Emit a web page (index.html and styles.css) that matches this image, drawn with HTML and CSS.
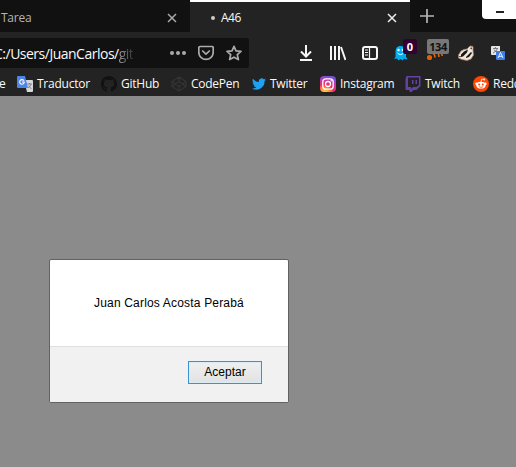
FILE: index.html
```
<!DOCTYPE html>
<html lang="es">
<head>
<meta charset="utf-8">
<title>A46</title>
<link rel="stylesheet" href="styles.css">
</head>
<body>
<header class="chrome">
  <div class="tabs">
    <div class="tab"><span class="tab-title">Tarea</span><svg class="close" width="10" height="10" viewBox="0 0 10 10"><path d="M1 1l8 8M9 1L1 9"/></svg></div>
    <div class="tab active"><i class="dot"></i><span class="tab-title">A46</span><svg class="close" width="10" height="10" viewBox="0 0 10 10"><path d="M1 1l8 8M9 1L1 9"/></svg></div>
    <svg class="plus" width="14" height="14" viewBox="0 0 14 14"><path d="M7 0v14M0 7h14"/></svg>
    <div class="minimize"><i></i></div>
  </div>
  <div class="toolbar">
    <div class="address">
      <span class="url">C:/Users/JuanCarlos/<span class="fade">git</span></span>
      <svg class="dots" width="16" height="16" viewBox="0 0 16 16"><circle cx="2" cy="8" r="2"/><circle cx="8" cy="8" r="2"/><circle cx="14" cy="8" r="2"/></svg>
      <svg class="line pocket" width="16" height="16" viewBox="0 0 16 16"><path d="M2 1.5h12a1.2 1.2 0 0 1 1.2 1.2v4.5a7.2 7.2 0 0 1-14.4 0V2.700A1.200 1.200 0 0 1 2 1.500zM4.700 6L8 9.200 11.300 6"/></svg>
      <svg class="line" width="16" height="16" viewBox="0 0 16 16"><path d="M8 1.300l2 4.500 5 .5-3.700 3.300 1.100 5L8 12.200l-4.400 2.400 1.100-5L1 6.300l5-.5z"/></svg>
    </div>
    <div class="actions">
      <svg width="14" height="18" viewBox="0 0 14 18"><path class="w" d="M7 1v11M2 7.500l5 5 5-5M1 16h12"/></svg>
      <svg width="16" height="16" viewBox="0 0 16 16"><path class="w" d="M1 1v14M5 1v14M9 1v14M11 2l4.500 13"/></svg>
      <svg width="16" height="16" viewBox="0 0 16 16"><rect class="w" x="1" y="2" width="14" height="12" rx="2"/><path class="w thin" d="M7.500 2v12M3 5h3M3 7.500h3M3 10h3"/></svg>
      <div class="ext"><svg class="ghost" width="16" height="16" viewBox="0 0 16 16"><path fill="#00aef0" d="M2.500 7C2.500 2.500 5 1 7.500 1S13 2.500 13 7v5l1.500 2-2 .5-1.500-1-1.500 2-2-1.500-2 1.500-1.500-2L1 14l1.500-2z"/><circle cx="5.500" cy="5" r="1.200" fill="#fff"/><circle cx="9.800" cy="5" r="1.200" fill="#fff"/><path d="M4.500 8q3 3.200 6 0" fill="none" stroke="#fff"/></svg><b class="badge zero">0</b></div>
      <div class="ext"><svg width="16" height="16" viewBox="0 0 16 16"><circle cx="2.500" cy="12.500" r="2.600" fill="#e66000"/><path d="M5.500 8q2.500 1 2.500 4.500M10 7q2.200 1.500 1.800 5M13.500 7q2 1.500 1.500 4" fill="none" stroke="#d8651c" stroke-width="1.700"/></svg><b class="badge count">134</b></div>
      <svg width="16" height="16" viewBox="0 0 16 16"><path fill="#eee4d8" stroke="#a98266" stroke-width=".8" d="M.5 10L3 6l3-1.500L9 4l3-3 3 .5v4l.5 4.500-2.500 4-4 1.500-5-1-3.500-1.500z"/><path fill="#151515" d="M3 9.500l3-3 4-2-1 3-4 4-2 .5zM8 12l5-5 1 1-3 4-3 1zM12 3l2-.5-.5 2z"/><path fill="#151515" d="M1 11h2l-1 1.500z"/></svg>
      <svg width="16" height="16" viewBox="0 0 16 16"><path fill="#e4e4e4" d="M2 1h8v9H2a1 1 0 0 1-1-1V2a1 1 0 0 1 1-1z"/><path d="M3 3.500h5M5.500 2v1.500M7.500 3.500Q7 6 3 8M4 4.500q1 2 3 3" fill="none" stroke="#666" stroke-width=".8"/><path fill="#3e7fe8" d="M6 6h8a1 1 0 0 1 1 1v7a1 1 0 0 1-1 1H7a1 1 0 0 1-1-1z"/><path d="M8 13l2.500-5.500L13 13M9 11.300h3" fill="none" stroke="#fff" stroke-width=".9"/></svg>
    </div>
  </div>
  <nav class="bookmarks">
    <a class="b-cut">e</a>
    <a class="b-translate"><svg width="16" height="16" viewBox="0 0 16 16"><path fill="#d5d7da" d="M7 4h8a1 1 0 0 1 1 1v10a1 1 0 0 1-1 1H10z"/><path fill="#4c86e8" d="M1 0h7l3 12H1a1 1 0 0 1-1-1V1a1 1 0 0 1 1-1z"/><path d="M7 4.800A2.300 2.300 0 1 0 7.300 6H5" fill="none" stroke="#fff" stroke-width="1.100"/><path d="M10 8h5M12.500 7v1M14 8q-1 3-3 4M11.500 9.500l3 3.500" fill="none" stroke="#6c7580" stroke-width=".8"/></svg><span>Traductor</span></a>
    <a class="b-github"><svg width="16" height="16" viewBox="0 0 16 16"><path fill="#111214" d="M8 0C3.580 0 0 3.580 0 8c0 3.540 2.290 6.530 5.470 7.590.4.070.55-.17.55-.38 0-.19-.01-.82-.01-1.490-2.010.37-2.530-.49-2.690-.94-.09-.23-.48-.94-.82-1.130-.28-.15-.68-.52-.01-.53.63-.01 1.080.58 1.230.82.72 1.210 1.870.87 2.330.66.07-.52.28-.87.51-1.070-1.780-.2-3.640-.89-3.640-3.950 0-.87.31-1.590.82-2.150-.08-.2-.36-1.020.08-2.120 0 0 .67-.21 2.200.82a7.600 7.600 0 0 1 4 0c1.530-1.040 2.200-.82 2.200-.82.44 1.100.16 1.920.08 2.120.51.56.82 1.270.82 2.150 0 3.070-1.870 3.750-3.650 3.950.29.25.54.73.54 1.480 0 1.070-.01 1.930-.01 2.200 0 .21.15.46.55.38A8 8 0 0 0 8 0z"/></svg><span>GitHub</span></a>
    <a class="b-codepen"><svg width="16" height="16" viewBox="0 0 16 16"><path d="M8 1l7 4.500v5L8 15l-7-4.500v-5zM1 5.500l7 5 7-5M1 10.500l7-5 7 5M8 1v4.500M8 10.500V15" fill="none" stroke="#343437" stroke-width="1.100"/></svg><span>CodePen</span></a>
    <a class="b-twitter"><svg width="14" height="14" viewBox="0 0 24 24"><path fill="#1da1f2" d="M24 4.600a10 10 0 0 1-2.800.8 5 5 0 0 0 2.100-2.700 10 10 0 0 1-3.100 1.200 4.900 4.900 0 0 0-8.400 4.500A14 14 0 0 1 1.700 3.200a4.900 4.900 0 0 0 1.500 6.500 4.900 4.900 0 0 1-2.200-.6 4.900 4.900 0 0 0 3.900 4.900 5 5 0 0 1-2.200.1 4.900 4.900 0 0 0 4.600 3.400A9.900 9.900 0 0 1 0 19.500 14 14 0 0 0 21.500 7 10 10 0 0 0 24 4.600z"/></svg><span>Twitter</span></a>
    <a class="b-instagram"><svg width="16" height="16" viewBox="0 0 16 16"><defs><radialGradient id="ig" cx=".3" cy="1.050" r="1.100"><stop offset="0" stop-color="#ffd35a"/><stop offset=".25" stop-color="#ff9b37"/><stop offset=".5" stop-color="#f42d61"/><stop offset=".75" stop-color="#c13bb0"/><stop offset="1" stop-color="#6c50dc"/></radialGradient></defs><rect width="16" height="16" rx="4" fill="url(#ig)"/><g fill="none" stroke="#fff" stroke-width="1.300"><rect x="2.800" y="2.800" width="10.400" height="10.400" rx="3"/><circle cx="8" cy="8" r="2.500"/></g><circle cx="11.200" cy="4.800" r=".7" fill="#fff"/></svg><span>Instagram</span></a>
    <a class="b-twitch"><svg width="16" height="16" viewBox="0 0 16 16"><path fill="#6441a5" fill-rule="evenodd" d="M1.500 0H15.500V10L11.500 14H8.500L6.500 16H4.500V14H.5V3zM3 1.500V11h3v2l2-2h3.500L14 9V1.500zM7 4h1.500v4H7zM10.500 4H12v4h-1.500z"/></svg><span>Twitch</span></a>
    <a class="b-reddit"><svg width="16" height="16" viewBox="0 0 16 16"><circle cx="8" cy="8" r="8" fill="#ff4500"/><ellipse cx="8" cy="9.200" rx="4.600" ry="3.400" fill="#fff"/><circle cx="3.500" cy="7.800" r="1.200" fill="#fff"/><circle cx="12.500" cy="7.800" r="1.200" fill="#fff"/><circle cx="11.200" cy="3.500" r="1" fill="#fff"/><path d="M8 6l.7-3 2.500.5" fill="none" stroke="#fff" stroke-width=".8"/><circle cx="6.200" cy="8.500" r="1" fill="#ff4500"/><circle cx="9.800" cy="8.500" r="1" fill="#ff4500"/><path d="M6 10.700q2 1.300 4 0" fill="none" stroke="#ff4500" stroke-width=".8"/></svg><span>Reddit</span></a>
  </nav>
</header>
<main class="page">
  <section class="dialog">
    <p class="message">Juan Carlos Acosta Perabá</p>
    <footer class="dialog-footer"><button class="accept">Aceptar</button></footer>
  </section>
</main>
</body>
</html>
```
FILE: styles.css
```
* { box-sizing: border-box; }
body { margin: 0; width: 516px; height: 467px; overflow: hidden; background: #8b8b8b; font: 12px/16px "Open Sans", "Noto Sans", sans-serif; }
svg { display: block; flex: none; }
.chrome { height: 96px; background: #232323; color: #fafafa; overflow: hidden; }
.tabs { height: 32px; display: flex; align-items: flex-start; background: #111; }
.tab { width: 189px; height: 32px; padding: 3px 12px 0 1px; display: flex; align-items: center; color: #b5b5b5; }
.tab.active { width: 220px; margin-left: 1px; padding: 1px 13px 0 21px; border-top: 2px solid #fff; background: #232323; color: #fafafa; }
.tab-title { letter-spacing: -.25px; }
.close { margin-left: auto; fill: none; stroke: #aaa; stroke-width: 1.5; }
.active .close { stroke: #eee; }
.active .tab-title { margin-left: 6px; letter-spacing: -.5px; }
.dot { width: 4px; height: 4px; border-radius: 50%; background: #ccc; }
.plus { margin: 9px 0 0 10px; stroke: #b5b5b5; stroke-width: 1.7; }
.minimize { width: 34px; height: 19px; margin-left: auto; padding: 11px 0 0 14px; border-radius: 0 0 0 4px; background: #fff; }
.minimize i { display: block; width: 8px; height: 2px; background: #222; }
.toolbar { display: flex; height: 42px; padding-top: 6px; }
.address { width: 249px; height: 30px; padding-right: 7px; display: flex; align-items: center; overflow: hidden; background: #111; border-radius: 0 2px 2px 0; }
.url { width: 170px; flex: none; padding-top: 2px; font-size: 14px; letter-spacing: -.5px; text-indent: -6px; white-space: nowrap; }
.fade { color: transparent; background: linear-gradient(90deg, #999, #333); -webkit-background-clip: text; background-clip: text; }
.dots { fill: #aaa; }
.line { margin-left: 12px; fill: none; stroke: #aaa; stroke-width: 1.7; stroke-linejoin: round; stroke-linecap: round; }
.actions { display: grid; grid-template-columns: 31px 32px 33px 32px 31px 32px 16px; align-items: center; height: 30px; margin-left: 50px; }
.w { fill: none; stroke: #f6f6f6; stroke-width: 2; }
.thin { stroke-width: 1.2; }
.ext { position: relative; }
.ghost { margin-left: -2px; }
.badge { position: absolute; top: -6px; height: 15px; border-radius: 2px; text-align: center; line-height: 15px; }
.zero { left: 8px; width: 14px; background: #330033; color: #fff; font-size: 11px; }
.count { left: 0; width: 22px; background: #777; color: #111; font-size: 11px; letter-spacing: -.4px; }
.bookmarks { height: 22px; display: flex; align-items: center; white-space: nowrap; padding-bottom: 3px; }
.bookmarks a { display: flex; flex: none; align-items: center; gap: 4px; height: 19px; letter-spacing: -.25px; }
.bookmarks span { padding-top: 1px; }
.bookmarks .b-cut { width: 17px; padding-top: 1px; text-indent: -1px; }
.b-translate { width: 84px; }
.b-github { width: 70px; }
.b-codepen { width: 81px; }
.b-twitter { width: 68px; }
.b-instagram { width: 85px; }
.b-twitch { width: 68px; }
.b-reddit { width: 70px; }
.page { padding: 163px 0 0 49px; }
.dialog { width: 240px; height: 144px; border: 1px solid #626262; border-radius: 2px; background: #fff; color: #000; font-family: "Liberation Sans", sans-serif; overflow: hidden; }
.message { height: 86px; margin: 0; padding: 35px 0 0 44px; font-size: 12px; letter-spacing: .18px; white-space: nowrap; }
.dialog-footer { height: 56px; padding: 14px 26px 0 0; border-top: 1px solid #dfdfdf; background: #f1f1f1; display: flex; justify-content: flex-end; align-items: flex-start; }
.accept { width: 74px; height: 23px; padding: 0 0 1px; border: 1px solid #3c91cf; background: linear-gradient(#f0f0f0, #e2e2e2); color: #000; font: 12px/20px "Liberation Sans", sans-serif; letter-spacing: 0; box-shadow: inset 0 0 0 1px #d9edf6; }
```
